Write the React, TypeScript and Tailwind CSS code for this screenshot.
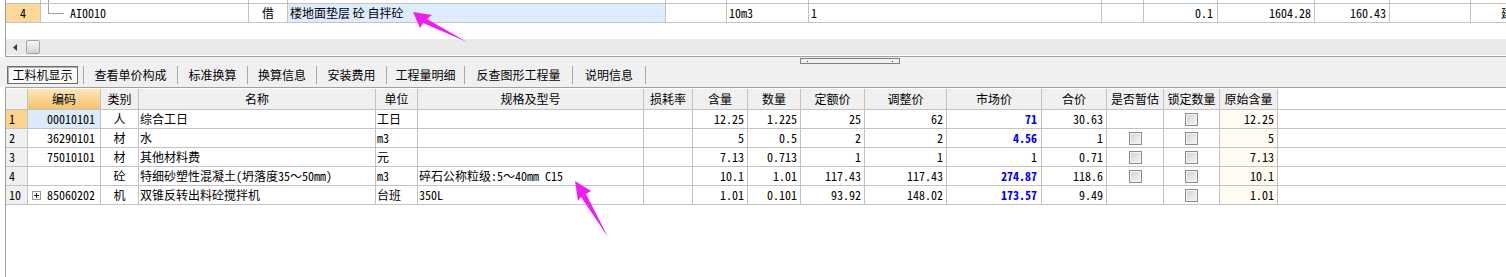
import React from "react";

const cjk = "font-['Noto_Sans_CJK_SC',sans-serif]";
const mono = "font-['Noto_Sans_Mono_CJK_SC','Noto_Sans_CJK_SC',monospace]";
const line = "border-[#c3c3c3]";

// top grid columns (only the visible row of the upper table)
const topCols = [
  "w-[35px]",
  "w-[208px]",
  "w-[39px]",
  "w-[378px]",
  "w-[61px]",
  "w-[82px]",
  "w-[293px]",
  "w-[42px]",
  "w-[74px]",
  "w-[97px]",
  "w-[75px]",
  "w-[81px]",
];

const cols = [
  { t: "", w: "w-[22px]" },
  { t: "编码", w: "w-[73px]" },
  { t: "类别", w: "w-[38px]" },
  { t: "名称", w: "w-[237px]" },
  { t: "单位", w: "w-[42px]" },
  { t: "规格及型号", w: "w-[226px]" },
  { t: "损耗率", w: "w-[49px]" },
  { t: "含量", w: "w-[55px]" },
  { t: "数量", w: "w-[53px]" },
  { t: "定额价", w: "w-[64px]" },
  { t: "调整价", w: "w-[82px]" },
  { t: "市场价", w: "w-[95px]" },
  { t: "合价", w: "w-[65px]" },
  { t: "是否暂估", w: "w-[57px]" },
  { t: "锁定数量", w: "w-[56px]" },
  { t: "原始含量", w: "w-[58px]" },
];

type Row = {
  n: string;
  code: string;
  plus?: boolean;
  kind: string;
  name: string;
  unit: string;
  spec: string;
  qty: string;
  num: string;
  quota: string;
  adj: string;
  market: string;
  blue: boolean;
  total: string;
  est: boolean;
  orig: string;
};

const rows: Row[] = [
  { n: "1", code: "00010101", kind: "人", name: "综合工日", unit: "工日", spec: "", qty: "12.25", num: "1.225", quota: "25", adj: "62", market: "71", blue: true, total: "30.63", est: false, orig: "12.25" },
  { n: "2", code: "36290101", kind: "材", name: "水", unit: "m3", spec: "", qty: "5", num: "0.5", quota: "2", adj: "2", market: "4.56", blue: true, total: "1", est: true, orig: "5" },
  { n: "3", code: "75010101", kind: "材", name: "其他材料费", unit: "元", spec: "", qty: "7.13", num: "0.713", quota: "1", adj: "1", market: "1", blue: false, total: "0.71", est: true, orig: "7.13" },
  { n: "4", code: "", kind: "砼", name: "特细砂塑性混凝土(坍落度35～50mm)", unit: "m3", spec: "碎石公称粒级:5～40mm C15", qty: "10.1", num: "1.01", quota: "117.43", adj: "117.43", market: "274.87", blue: true, total: "118.6", est: true, orig: "10.1" },
  { n: "10", code: "85060202", plus: true, kind: "机", name: "双锥反转出料砼搅拌机", unit: "台班", spec: "350L", qty: "1.01", num: "0.101", quota: "93.92", adj: "148.02", market: "173.57", blue: true, total: "9.49", est: false, orig: "1.01" },
];

function Check() {
  return (
    <span className="inline-block w-[13px] h-[13px] border border-[#8c8c8c] bg-linear-to-br from-[#d2d2d2] to-[#f6f6f6] shadow-[inset_0_0_0_1px_#f4f4f4]" />
  );
}

function PlusBox() {
  return (
    <svg width="9" height="9" viewBox="0 0 9 9" className="shrink-0">
      <rect x="0.5" y="0.5" width="8" height="8" fill="#fff" stroke="#9a9a9a" />
      <path d="M2 4.5h5M4.5 2v5" stroke="#222" strokeWidth="1" />
    </svg>
  );
}

const cell = `h-full border-r ${line} flex items-center overflow-hidden whitespace-nowrap shrink-0`;
const num = `${cell} justify-end pr-[3px] ${mono}`;

function TopPanel() {
  return (
    <div className="ml-[5px] border-l border-b border-[#a0a0a0] text-[12px] text-black">
      {/* slice of the previous row */}
      <div className={`flex h-[4px] border-b ${line}`}>
        {topCols.map((w, i) => (
          <div key={i} className={`${w} h-full border-r ${line} shrink-0`}>
            {i === 1 && <div className="ml-[7px] h-full border-l border-[#a0a0a0]" />}
          </div>
        ))}
        <div className="flex-1" />
      </div>
      <div className={`flex h-[19px] border-b ${line}`}>
        <div className={`${cell} w-[35px] justify-center bg-[#fcd99a] ${mono}`}>4</div>
        <div className={`${cell} w-[208px] items-start`}>
          <div className="ml-[7px] w-[16px] h-[10px] border-l border-b border-[#a0a0a0] shrink-0" />
          <span className={`ml-[6px] self-center ${mono}`}>AI0010</span>
        </div>
        <div className={`${cell} w-[39px] justify-center ${cjk}`}>借</div>
        <div className={`${cell} w-[378px] pl-[2px] bg-[#ddedfd] ${cjk}`}>楼地面垫层 砼 自拌砼</div>
        <div className={`${cell} w-[61px]`} />
        <div className={`${cell} w-[82px] pl-[2px] ${mono}`}>10m3</div>
        <div className={`${cell} w-[293px] pl-[2px] ${mono}`}>1</div>
        <div className={`${cell} w-[42px]`} />
        <div className={`${num} w-[74px] pr-[4px]`}>0.1</div>
        <div className={`${num} w-[97px]`}>1604.28</div>
        <div className={`${num} w-[75px]`}>160.43</div>
        <div className={`${cell} w-[81px]`} />
        <div className={`flex-1 h-full flex items-center overflow-hidden whitespace-nowrap pl-[30px] ${cjk}`}>建设</div>
      </div>
      <div className="h-[16px]" />
      <div className="h-[17px] bg-[#eaeaea] border-b border-white flex items-center">
        <svg width="4" height="7" viewBox="0 0 4 7" className="ml-[7px]">
          <polygon points="4,0 0,3.5 4,7" fill="#404040" />
        </svg>
        <div className="ml-[9px] w-[14px] h-[14px] border border-[#a2a2a2] rounded-[2px] bg-linear-to-b from-[#f7f7f7] to-[#d3d3d3]" />
      </div>
    </div>
  );
}

const tabs = [
  { t: "查看单价构成", w: "w-[94px]" },
  { t: "标准换算", w: "w-[70px]" },
  { t: "换算信息", w: "w-[69px]" },
  { t: "安装费用", w: "w-[70px]" },
  { t: "工程量明细", w: "w-[78px]" },
  { t: "反查图形工程量", w: "w-[108px]" },
  { t: "说明信息", w: "w-[73px]" },
];

function TabBar() {
  return (
    <div className={`h-[30px] bg-[#f0f0f0] text-[12px] text-black ${cjk}`}>
      <div className="h-[9px] pt-px">
        <div className="ml-[800px] w-[100px] h-[6px] border border-[#808080] flex items-center justify-between px-[6px]">
          <span className="w-px h-px bg-[#2030c0]" />
          <span className="w-px h-px bg-[#2030c0]" />
        </div>
      </div>
      <div className="flex h-[18px] pl-[7px]">
        <div className="w-[71px] h-full border border-[#6e6e6e] bg-[#fbfbfb] shadow-[inset_1px_1px_0_#b0b0b0] flex items-center justify-center leading-none">
          工料机显示
        </div>
        <div className="w-[5px]" />
        <div className="w-px h-full bg-[#a8a8a8]" />
        {tabs.map((tab) => (
          <div key={tab.t} className={`${tab.w} h-full border-r border-[#a8a8a8] flex items-center justify-center leading-none`}>
            {tab.t}
          </div>
        ))}
      </div>
    </div>
  );
}

function Grid() {
  return (
    <div className="ml-[5px] border-l border-t border-[#a0a0a0] pt-px h-[190px] text-[12px] text-black">
      <div className={`flex h-[21px] border-b ${line}`}>
        {cols.map((c, i) => (
          <div
            key={i}
            className={`${c.w} h-full border-r ${line} shrink-0 flex items-center justify-center whitespace-nowrap ${cjk} ${
              i === 1 ? "bg-linear-to-b from-[#fde6b9] to-[#f5c36d]" : "bg-[#f0f0f0]"
            }`}
          >
            {c.t}
          </div>
        ))}
      </div>
      {rows.map((r, i) => (
        <div key={r.n} className={`flex h-[19px] border-b ${line}`}>
          <div className={`${cell} w-[22px] pl-[3px] ${mono} ${i === 0 ? "bg-[#fcd38e]" : "bg-[#f0f0f0]"}`}>{r.n}</div>
          <div className={`${cell} w-[73px] justify-end pr-[5px] ${mono} ${i === 0 ? "bg-[#dcebfb]" : ""}`}>
            {r.plus && (
              <span className="mr-auto ml-[4px] flex">
                <PlusBox />
              </span>
            )}
            {r.code}
          </div>
          <div className={`${cell} w-[38px] justify-center ${cjk}`}>{r.kind}</div>
          <div className={`${cell} w-[237px] pl-px ${mono}`}>{r.name}</div>
          <div className={`${cell} w-[42px] pl-px ${mono}`}>{r.unit}</div>
          <div className={`${cell} w-[226px] pl-px ${mono}`}>{r.spec}</div>
          <div className={`${cell} w-[49px]`} />
          <div className={`${num} w-[55px]`}>{r.qty}</div>
          <div className={`${num} w-[53px]`}>{r.num}</div>
          <div className={`${num} w-[64px]`}>{r.quota}</div>
          <div className={`${num} w-[82px]`}>{r.adj}</div>
          <div className={`${num} w-[95px] pr-[4px] ${r.blue ? "text-[#0000ff] font-bold" : ""}`}>{r.market}</div>
          <div className={`${num} w-[65px]`}>{r.total}</div>
          <div className={`${cell} w-[57px] justify-center`}>{r.est && <Check />}</div>
          <div className={`${cell} w-[56px] justify-center`}>
            <Check />
          </div>
          <div className={`${num} w-[58px] bg-[#fffaf2]`}>{r.orig}</div>
        </div>
      ))}
    </div>
  );
}

export default function App() {
  return (
    <div className="relative w-[1506px] h-[277px] bg-white overflow-hidden">
      <TopPanel />
      <TabBar />
      <Grid />
      <svg className="absolute inset-0 pointer-events-none" width="1506" height="277" viewBox="0 0 1506 277">
        <polygon points="413,12 432,15 427,19 467,42 423,23 420,28" fill="#ee1fee" />
        <polygon points="575,181 591,191 586,194 608,237 581,197 578,201" fill="#ee1fee" />
      </svg>
    </div>
  );
}
